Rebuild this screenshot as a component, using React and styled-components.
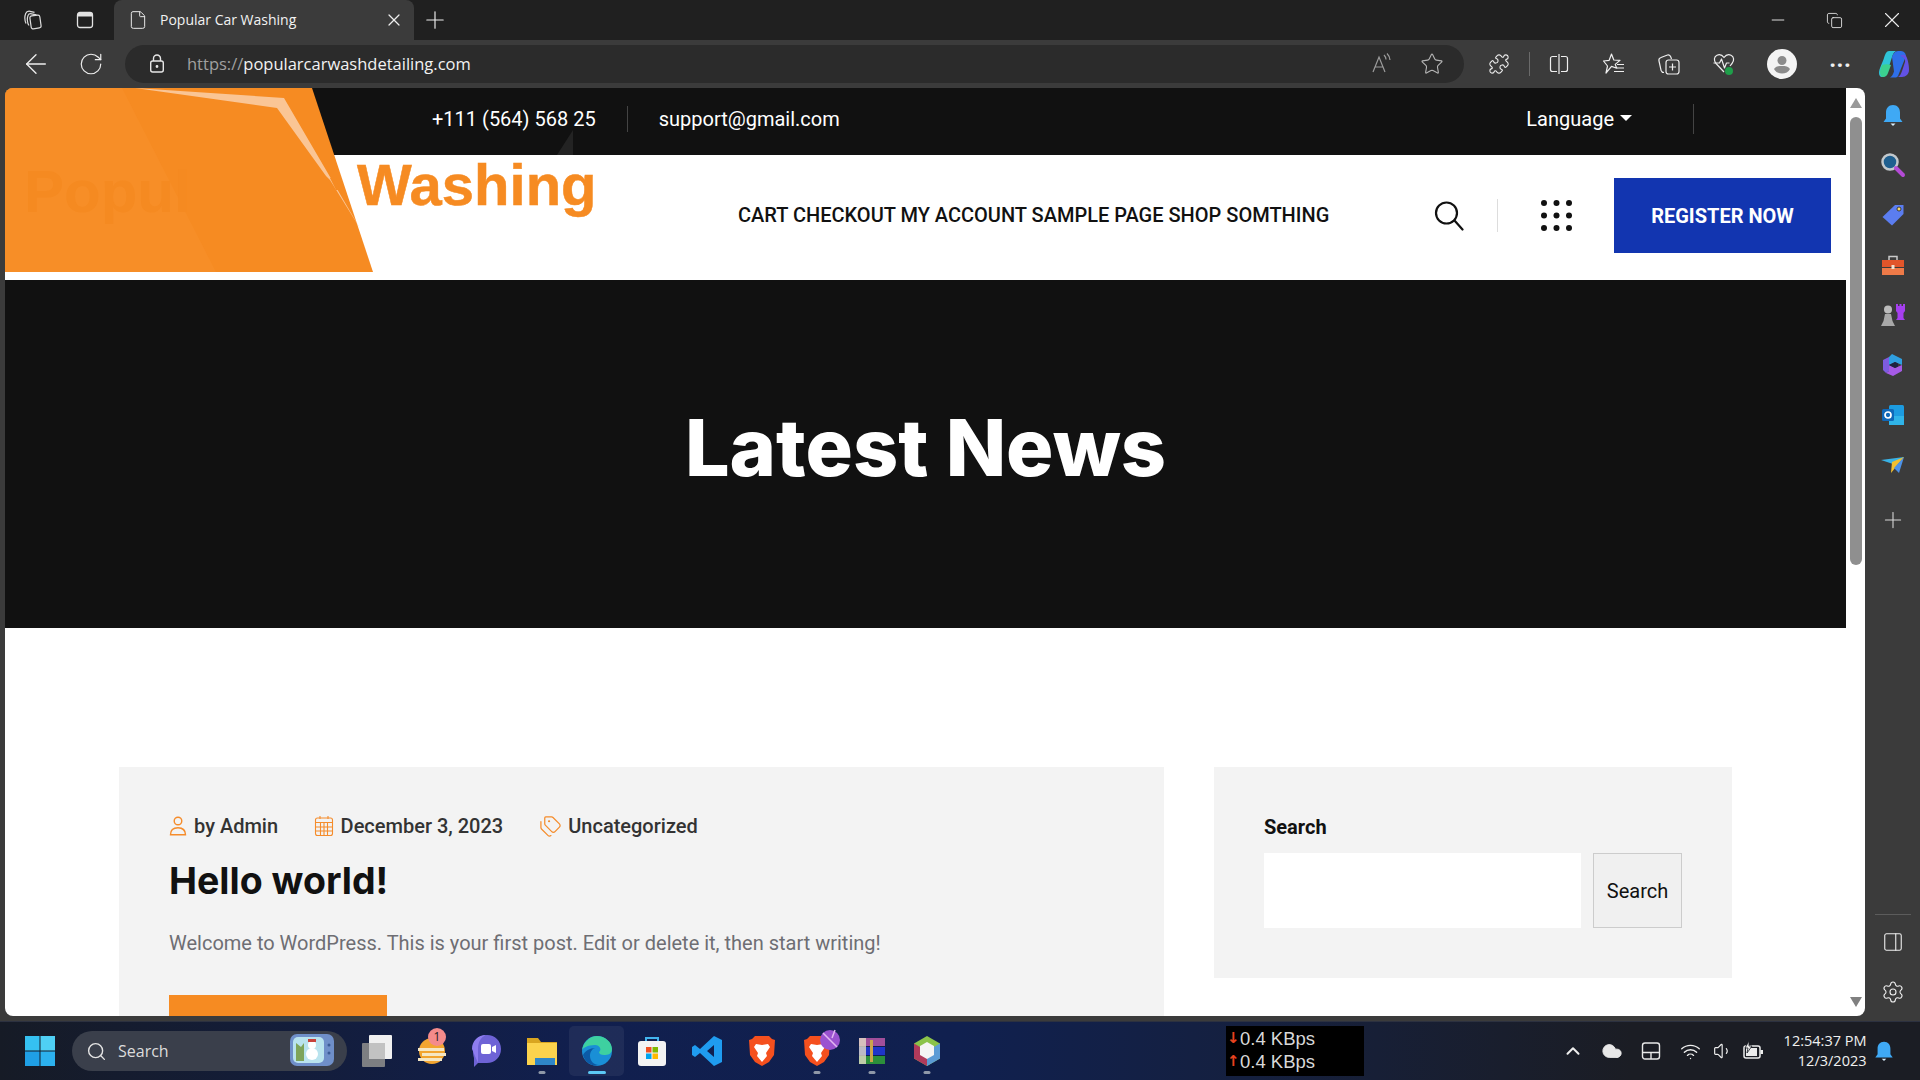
import styled, { createGlobalStyle } from 'styled-components';
import {
  ArrowLeft, RotateCw, Star, Puzzle, Plus, X, Minus, Search as SearchIcon, File, Copy, Settings,
  PanelRight, ChevronUp, Cloud, Wifi, Volume1, Tags,
} from 'lucide-react';

const GlobalStyle = createGlobalStyle`
  html, body {
    margin: 0;
    padding: 0;
    background: #3b3b3b;
    overflow: hidden;
  }
  * { box-sizing: border-box; }
`;

const ui = '"Open Sans", "Noto Sans", sans-serif';
const site = 'Roboto, "Liberation Sans", sans-serif';

const SIDE_ICONS = [Bell, Magnifier, PriceTag, Toolbox, Chess, M365, Outlook, Plane];
const TASK_ICONS = [
  { key: 'view', Icon: TaskView },
  { key: 'burger', Icon: Burger },
  { key: 'meet', Icon: Meet },
  { key: 'files', Icon: Folder, open: true },
  { key: 'edge', Icon: Edge, active: true },
  { key: 'store', Icon: Store },
  { key: 'code', Icon: Code },
  { key: 'brave', Icon: Brave },
  { key: 'brave2', Icon: BravePurple, open: true },
  { key: 'rar', Icon: Rar, open: true },
  { key: 'box', Icon: Cube, open: true },
];

function Bell({ size = 24 }) {
  return (
    <svg width={size} height={size} viewBox="0 0 24 24">
      <path d="M12 2c-4.500 0-7 3.400-7 7.500v6L2.500 19h19L19 15.500v-6C19 5.400 16.500 2 12 2z" fill="#3fa9f5" />
      <path d="M9.500 20.500h5L12 23z" fill="#d8eefc" />
    </svg>
  );
}

function Magnifier() {
  return (
    <svg width="26" height="26" viewBox="0 0 26 26">
      <circle cx="10" cy="10" r="7.500" fill="#1f5f8f" stroke="#c2c8cc" strokeWidth="2.500" />
      <path d="M16 16l7 7" stroke="#b44bd6" strokeWidth="4" strokeLinecap="round" />
    </svg>
  );
}

function PriceTag() {
  return (
    <svg width="24" height="24" viewBox="0 0 24 24">
      <path d="M14 2h8.500v9L11 22.500 1.500 14z" fill="#5b7df0" />
      <circle cx="18" cy="6" r="2" fill="#f5d76e" stroke="#222" strokeWidth="0.800" />
    </svg>
  );
}

function Toolbox() {
  return (
    <svg width="24" height="22" viewBox="0 0 24 22">
      <path d="M8 6V2.500h8V6" fill="none" stroke="#c9c9c9" strokeWidth="1.500" />
      <rect x="1" y="6" width="22" height="7" fill="#e2552a" />
      <rect x="1" y="14" width="22" height="7" fill="#ee7a48" />
      <rect x="10.500" y="11" width="3" height="4" fill="#f3e3d0" />
    </svg>
  );
}

function Chess() {
  return (
    <svg width="26" height="24" viewBox="0 0 26 24">
      <path d="M16 1h2v2h1.500V1h2v2H23V1h2v7l-1.500 2v5l1.500 2h-9l1.500-2v-5L16 8z" fill="#a63ff0" />
      <circle cx="8" cy="6.500" r="4" fill="#bcbcbc" />
      <path d="M5 11h6l1.500 7 2.500 5H1l2.500-5z" fill="#a8a8a8" />
    </svg>
  );
}

function M365() {
  return (
    <svg width="22" height="24" viewBox="0 0 22 24">
      <path d="M10 1l10 5v6l-7-3-6 3V4z" fill="#2f9fe0" />
      <path d="M1 7l6-3v14l-3 2-3-3z" fill="#7d5ce0" />
      <path d="M7 12l6 3 7-3v6l-9 5-7-3 3-2z" fill="#a55ae6" />
      <path d="M13 9l3 1.500v3L13 15l-6-3z" fill="#1d2340" />
    </svg>
  );
}

function Outlook() {
  return (
    <svg width="22" height="22" viewBox="0 0 22 22">
      <rect x="7" y="1" width="15" height="20" rx="1.500" fill="#1c9be0" />
      <path d="M7 12h15v9H7z" fill="#30b4e8" />
      <rect x="0" y="5" width="12" height="12" rx="1.500" fill="#0f68b8" />
      <circle cx="6" cy="11" r="3" fill="none" stroke="#fff" strokeWidth="1.700" />
    </svg>
  );
}

function Plane() {
  return (
    <svg width="24" height="18" viewBox="0 0 24 18">
      <path d="M0 4l23-3-8 8z" fill="#39b2e6" />
      <path d="M23 1L11 6l-1 11z" fill="#f3c02f" />
      <path d="M23 1l-5 16-5-5z" fill="#4d92e8" />
    </svg>
  );
}

function Workspaces() {
  return (
    <svg width="22" height="22" viewBox="0 0 22 22" fill="none" stroke="#dcdcdc" strokeWidth="1.200">
      <rect x="8.500" y="6.500" width="10" height="13" rx="2" transform="rotate(-8 13 13)" />
      <path d="M7 16.500C5 14 5 9 6 6.500c.6-1.500 2-2 3.500-1.700l5 1" />
      <path d="M4 14.500C2.500 11 2.700 7 3.700 4.500 4.500 2.500 6 2 8 2.300l4.500 1" />
    </svg>
  );
}

function TabActions() {
  return (
    <svg width="20" height="20" viewBox="0 0 20 20" fill="none">
      <rect x="2.500" y="2.500" width="15" height="15" rx="2.500" stroke="#e2e2e2" strokeWidth="1.300" />
      <path d="M2.500 5a2.500 2.500 0 0 1 2.500-2.500h10A2.500 2.500 0 0 1 17.500 5v1.500h-15z" fill="#e2e2e2" />
    </svg>
  );
}

function LockDot() {
  return (
    <svg width="18" height="22" viewBox="0 0 18 22" fill="none" stroke="#e6e6e6" strokeWidth="1.400">
      <rect x="2.700" y="8" width="12.600" height="11" rx="2" />
      <path d="M5.500 8V5.500a3.500 3.500 0 0 1 7 0V8" />
      <circle cx="9" cy="13.500" r="0.700" fill="#e6e6e6" />
    </svg>
  );
}

function ReadAloud() {
  return (
    <svg width="22" height="22" viewBox="0 0 22 22" fill="none" stroke="#9c9c9c" strokeWidth="1.200">
      <path d="M2 20l6-15 6 15M4 15h8" />
      <path d="M13 3c1.500 1.500 2 3 2 4.500M16 1.500c2 2 3 4 3 6.500" />
    </svg>
  );
}

function SplitScreen() {
  return (
    <svg width="22" height="22" viewBox="0 0 22 22" fill="none" stroke="#eee" strokeWidth="1.200">
      <path d="M9 3.500H4.500a2 2 0 0 0-2 2v11a2 2 0 0 0 2 2H9M13 3.500h4.500a2 2 0 0 1 2 2v11a2 2 0 0 1-2 2H13M11 1v20" />
    </svg>
  );
}

function FavoriteList() {
  return (
    <svg width="24" height="24" viewBox="0 0 24 24" fill="none" stroke="#eee" strokeWidth="1.200" strokeLinejoin="round">
      <path d="M9.500 2l2.300 6 6.200.4-4.800 4 1.500 3.800-5.200-1.800L4 21l1.500-7L1.500 9l5.700-.7z" />
      <path d="M15 12.500h7M15 16h7M12 19.500h10" />
    </svg>
  );
}

function Collections() {
  return (
    <svg width="24" height="24" viewBox="0 0 24 24" fill="none" stroke="#eee" strokeWidth="1.200">
      <path d="M7 20.500c-1.500 0-2.500-.8-3-2.300L2 9c-.4-1.700.5-3 2-3.500L10.500 3c1.500-.4 2.800.5 3.300 2l.7 2" />
      <rect x="9" y="8" width="13" height="14" rx="2.500" />
      <path d="M15.500 11.500v7M12 15h7" />
    </svg>
  );
}

function HeartStatus() {
  return (
    <svg width="24" height="24" viewBox="0 0 24 24" fill="none" stroke="#eee" strokeWidth="1.200" strokeLinejoin="round">
      <path d="M12 20l-8-8.500C1.500 8.500 2 4.500 5 3.200c2.500-1 5.200-.2 7 2.300 1.800-2.500 4.500-3.300 7-2.300 3 1.300 3.500 5.300 1 8.300L18 14" />
      <path d="M1.500 11h6l2-4 3 9 2-5h3" />
      <circle cx="17" cy="19" r="4" fill="#1f9e4a" stroke="none" />
    </svg>
  );
}

function Profile() {
  return (
    <svg width="30" height="30" viewBox="0 0 30 30">
      <circle cx="15" cy="15" r="15" fill="#f4f4f4" />
      <circle cx="15" cy="11.500" r="4.500" fill="#8b8b8b" />
      <path d="M7 20c1.500-2.500 4.500-3 8-3s6.500.5 8 3c-1.500 3-4.500 4.500-8 4.500S8.500 23 7 20z" fill="#8b8b8b" />
    </svg>
  );
}

function Copilot() {
  return (
    <svg width="32" height="32" viewBox="0 0 32 32">
      <path d="M11 3h7c-2 1-3 3-4 6L9 25c-.8 2.500-2.500 4-5 4-2 0-3-2-3-4 0-4 3-9 5-15 1.200-4 2.500-7 5-7z" fill="#2fc4d8" />
      <path d="M2 24c0-2 1-4 2-7 3-1 6-1 9 0l-3 8c-.8 2.500-2.500 4-5 4-2 0-3-2-3-5z" fill="#3bd08f" />
      <path d="M14 9c1-3 3-6 6-6h3c3 0 5 3 5 5l-8 20c-.7 1-2 1.500-3 1.500h-5c2-1 3-3 4-6z" fill="#2f6fe8" />
      <path d="M22 8c2-1 4-2 6 0 2 3 3 10 3 14 0 4-3 7-7 7h-4c2-1 3-3 4-6l3-9c.7-2.500-1-5-5-6z" fill="#6252e4" />
    </svg>
  );
}

function Dots() {
  const cells = [0, 1, 2].flatMap((y) => [0, 1, 2].map((x) => [x, y]));
  return (
    <svg width="32" height="32" viewBox="0 0 32 32" fill="#111">
      {cells.map(([x, y]) => (
        <circle key={`${x}-${y}`} cx={3 + x * 12.500} cy={3 + y * 12.500} r="3" />
      ))}
    </svg>
  );
}

function HeaderSearch() {
  return (
    <svg width="30" height="30" viewBox="0 0 30 30" fill="none" stroke="#111" strokeWidth="2.200" strokeLinecap="round">
      <circle cx="12.500" cy="12" r="10.500" />
      <path d="M20.500 19.500L28.500 28.500" />
    </svg>
  );
}

function LogoShape() {
  return (
    <LogoSvg viewBox="0 0 370 184">
      <path d="M0 0H308L369 184H0z" fill="#f68b22" />
      <path d="M0 0H118L212 184H0z" fill="#f78e27" />
      <path d="M131 0L280 10 357 142 326 92 322 88 273 20z" fill="#fac595" />
      <path d="M326 90l6 0 4 12-4 0z" fill="#f68b22" />
    </LogoSvg>
  );
}

function Person() {
  return (
    <svg width="18" height="20" viewBox="0 0 18 20" fill="none" stroke="#f58c2b" strokeWidth="1.400">
      <circle cx="9" cy="5" r="3.800" />
      <path d="M1.500 18.800c0-4.500 3-7 7.500-7s7.500 2.500 7.500 7z" />
    </svg>
  );
}

function CalendarGrid() {
  return (
    <svg width="20" height="22" viewBox="0 0 20 22" fill="none" stroke="#f58c2b" strokeWidth="1.100">
      <rect x="1.500" y="3" width="17" height="17.500" rx="2" />
      <path d="M1.500 7.500h17M1.500 12h17M1.500 16h17M6.500 7.500v13M10 7.500v13M13.500 7.500v13M6 1v3M14 1v3" />
    </svg>
  );
}

function Start() {
  return (
    <svg width="30" height="30" viewBox="0 0 30 30">
      <rect x="0" y="0" width="14.500" height="14.500" fill="#35c1f1" />
      <rect x="15.500" y="0" width="14.500" height="14.500" fill="#4fd0f5" />
      <rect x="0" y="15.500" width="14.500" height="14.500" fill="#1f9fe5" />
      <rect x="15.500" y="15.500" width="14.500" height="14.500" fill="#2cb1ee" />
    </svg>
  );
}

function SnowTv() {
  return (
    <svg width="44" height="36" viewBox="0 0 44 36">
      <rect x="0" y="1" width="44" height="32" rx="7" fill="#6f8fc9" />
      <rect x="3" y="4" width="31" height="26" rx="5" fill="#b9e3ee" />
      <circle cx="22" cy="21" r="6" fill="#fff" />
      <circle cx="22" cy="12" r="4" fill="#fff" />
      <rect x="18" y="6" width="8" height="3" fill="#c7423b" />
      <path d="M6 28V10l5 4 3-4v18z" fill="#7ea45a" />
      <circle cx="39" cy="12" r="1.500" fill="#3b5b96" />
      <circle cx="39" cy="20" r="1.500" fill="#3b5b96" />
    </svg>
  );
}

function TaskView() {
  return (
    <svg width="30" height="34" viewBox="0 0 30 34">
      <rect x="7" y="1" width="23" height="24" rx="1" fill="#f0f0f0" />
      <rect x="0" y="9" width="23" height="24" rx="1" fill="#8a8a8a" fillOpacity="0.900" />
      <rect x="7" y="9" width="16" height="16" fill="#c2c2c2" />
    </svg>
  );
}

function Burger() {
  return (
    <svg width="30" height="32" viewBox="0 0 30 32">
      <circle cx="15" cy="16" r="13" fill="#f2a530" />
      <path d="M1 13h26v3H1zM5 18h24v3H5zM1 23h24v3H1z" fill="#f5e7c4" />
    </svg>
  );
}

function Meet() {
  return (
    <svg width="30" height="34" viewBox="0 0 30 34">
      <path d="M15 1c8 0 14 6 14 14s-6 14-14 14H6l-4 4v-9C1 21 1 18 1 15 1 7 7 1 15 1z" fill="#6e63d6" />
      <path d="M0 15C0 7 6 1 14 1c-5 2-8 7-8 14v14z" fill="#8e7df0" />
      <rect x="9" y="10" width="10" height="10" rx="2" fill="#fff" />
      <path d="M20 13l4-2v8l-4-2z" fill="#fff" />
    </svg>
  );
}

function Folder() {
  return (
    <svg width="32" height="30" viewBox="0 0 32 30">
      <path d="M1 2h11l3 4h16v6H1z" fill="#d9a520" />
      <rect x="1" y="7" width="30" height="22" fill="#fcd34d" />
      <rect x="9" y="22" width="20" height="7" fill="#2f87c9" />
    </svg>
  );
}

function Edge() {
  return (
    <svg width="32" height="32" viewBox="0 0 32 32">
      <circle cx="16" cy="16" r="15" fill="#1a8fd6" />
      <path d="M1 16C2 7 9 1 16 1c8 0 15 6 15 13 0 5-4 6-8 6-3 0-5-1-5-3 3-2 1-7-4-7-7 0-13 3-13 6z" fill="#3ed0a0" />
      <path d="M14 13c-3 1-5 4-5 8 0 5 4 9 9 9-7 2-14-3-16-10 2-4 7-7 12-7z" fill="#0c5aa6" />
    </svg>
  );
}

function Store() {
  return (
    <svg width="30" height="32" viewBox="0 0 30 32">
      <path d="M9 6V3h12v3" fill="none" stroke="#42b4ee" strokeWidth="2" />
      <rect x="1" y="6" width="28" height="25" rx="3" fill="#f3f3f3" />
      <rect x="9" y="12" width="5.500" height="5.500" fill="#f05022" />
      <rect x="15.500" y="12" width="5.500" height="5.500" fill="#7fba00" />
      <rect x="9" y="18.500" width="5.500" height="5.500" fill="#00a4ef" />
      <rect x="15.500" y="18.500" width="5.500" height="5.500" fill="#ffb900" />
    </svg>
  );
}

function Code() {
  return (
    <svg width="32" height="32" viewBox="0 0 32 32">
      <path d="M23 1l8 4v22l-8 4L9 18l-5 4-3-2v-8l3-2 5 4zm0 9l-7 6 7 6z" fill="#1f9cf0" fillRule="evenodd" />
    </svg>
  );
}

function Brave() {
  return (
    <svg width="28" height="32" viewBox="0 0 28 32">
      <path d="M7 1h14l3 3 3 1-1 15-5 7-7 4-7-4-5-7L1 5l3-1z" fill="#f5501e" />
      <path d="M8 9l6 1 6-1 2 3-4 6 1 3-5 6-5-6 1-3-4-6z" fill="#fff" />
    </svg>
  );
}

function BravePurple() {
  return (
    <OverlapIcon>
      <Brave />
      <svg width="22" height="26" viewBox="0 0 22 26">
        <circle cx="11" cy="13" r="10" fill="#9a52d0" />
        <path d="M4 6l14 14M16 3l-3 8" stroke="#e2b7f2" strokeWidth="1.500" />
      </svg>
    </OverlapIcon>
  );
}

function Rar() {
  return (
    <svg width="28" height="28" viewBox="0 0 28 28">
      <rect x="1" y="1" width="26" height="8" fill="#a14f9a" />
      <rect x="1" y="10" width="26" height="8" fill="#1f35c8" />
      <rect x="1" y="19" width="26" height="8" fill="#2c8f3a" />
      <rect x="1" y="1" width="7" height="26" fill="#e4dcc6" fillOpacity="0.800" />
      <rect x="12" y="3" width="3" height="22" fill="#caa44a" />
    </svg>
  );
}

function Cube() {
  return (
    <svg width="28" height="32" viewBox="0 0 28 32">
      <path d="M14 1l13 7.500v15L14 31 1 23.500v-15z" fill="#8bc34a" />
      <path d="M1 8.500L14 16v15L1 23.500z" fill="#b03a5b" />
      <path d="M27 8.500L14 16v15l13-7.500z" fill="#5b9bd5" />
      <path d="M14 7l7 4v9l-7 4-7-4v-9z" fill="#f4f4f4" />
    </svg>
  );
}

function Touchpad() {
  return (
    <svg width="20" height="20" viewBox="0 0 20 20" fill="none" stroke="#e8e8e8" strokeWidth="1.400">
      <rect x="1.500" y="2" width="17" height="16" rx="2.500" />
      <path d="M1.500 11.500h17M10 11.500V18" />
    </svg>
  );
}

function Battery() {
  return (
    <svg width="22" height="20" viewBox="0 0 22 20">
      <rect x="2" y="5" width="16" height="12" rx="2" fill="none" stroke="#ececec" strokeWidth="1.500" />
      <rect x="4" y="7" width="11" height="8" fill="#ececec" />
      <rect x="18.500" y="9" width="2.500" height="4" fill="#ececec" />
      <path d="M7 0L3 7h3l-1 5 5-7H7z" fill="#ececec" stroke="#161a22" strokeWidth="0.800" />
    </svg>
  );
}

export default function App() {
  return (
    <Screen>
      <GlobalStyle />
      <TabStrip>
        <StripButton><Workspaces /></StripButton>
        <StripButton><TabActions /></StripButton>
        <Tab>
          <File size={20} strokeWidth={1.2} color="#e8e8e8" />
          <TabTitle>Popular Car Washing</TabTitle>
          <TabClose><X size={20} strokeWidth={1.5} color="#eee" /></TabClose>
        </Tab>
        <NewTab><Plus size={28} strokeWidth={1} color="#eee" /></NewTab>
        <WindowControls>
          <WindowButton><Minus size={20} strokeWidth={1.1} color="#eee" /></WindowButton>
          <WindowButton><Copy size={17} strokeWidth={1.2} color="#eee" /></WindowButton>
          <WindowButton><X size={26} strokeWidth={1} color="#eee" /></WindowButton>
        </WindowControls>
      </TabStrip>

      <Toolbar>
        <ToolSlot><ArrowLeft size={32} strokeWidth={1} color="#eee" /></ToolSlot>
        <ToolSlot><RotateCw size={26} strokeWidth={1.1} color="#eee" /></ToolSlot>
        <AddressBar>
          <LockDot />
          <Url>
            <UrlScheme>https://</UrlScheme>popularcarwashdetailing.com
          </Url>
          <AddressTools>
            <AddressSlot><ReadAloud /></AddressSlot>
            <AddressSlot><Star size={24} strokeWidth={1.1} color="#b5b5b5" /></AddressSlot>
          </AddressTools>
        </AddressBar>
        <ToolSlot><Puzzle size={22} strokeWidth={1.2} color="#eee" /></ToolSlot>
        <ToolDivider />
        <ToolSlot><SplitScreen /></ToolSlot>
        <ToolSlot><FavoriteList /></ToolSlot>
        <ToolSlot><Collections /></ToolSlot>
        <ToolSlot><HeartStatus /></ToolSlot>
        <ToolSlot $width={62}><Profile /></ToolSlot>
        <ToolSlot><MoreDots>···</MoreDots></ToolSlot>
        <ToolSlot $width={52}><Copilot /></ToolSlot>
      </Toolbar>

      <Body>
        <Page>
          <Content>
            <LogoBox>
              <LogoShape />
              <LogoGhost>Popul</LogoGhost>
              <LogoWord>Washing</LogoWord>
              <LogoShadow />
            </LogoBox>

            <TopBar>
              <TopText>+111 (564) 568 25</TopText>
              <TopDivider />
              <TopText>support@gmail.com</TopText>
              <LanguageGroup>
                <TopText>Language</TopText>
                <Caret />
                <LanguageDivider />
              </LanguageGroup>
            </TopBar>

            <Header>
              <Nav>CART CHECKOUT MY ACCOUNT SAMPLE PAGE SHOP SOMTHING</Nav>
              <HeaderTools>
                <HeaderSearch />
                <HeaderDivider />
                <Dots />
              </HeaderTools>
              <RegisterButton>REGISTER NOW</RegisterButton>
            </Header>

            <Hero>
              <HeroTitle>Latest News</HeroTitle>
            </Hero>

            <Main>
              <PostCard>
                <Meta>
                  <MetaItem $gap={7}><Person />by Admin</MetaItem>
                  <MetaItem $gap={6.5}><CalendarGrid />December 3, 2023</MetaItem>
                  <MetaItem $gap={6}><Tags size={23} strokeWidth={1.3} color="#f58c2b" />Uncategorized</MetaItem>
                </Meta>
                <PostTitle>Hello world!</PostTitle>
                <Excerpt>Welcome to WordPress. This is your first post. Edit or delete it, then start writing!</Excerpt>
                <ReadMore />
              </PostCard>
              <Widget>
                <WidgetLabel>Search</WidgetLabel>
                <SearchRow>
                  <SearchInput />
                  <SearchButton>Search</SearchButton>
                </SearchRow>
              </Widget>
            </Main>
          </Content>
          <ScrollRail>
            <ScrollArrow />
            <ScrollThumb />
            <ScrollArrow $down />
          </ScrollRail>
        </Page>

        <SideBar>
          {SIDE_ICONS.map((Icon, i) => (
            <SideSlot key={i}><Icon /></SideSlot>
          ))}
          <SidePlus><Plus size={26} strokeWidth={1} color="#d8d8d8" /></SidePlus>
          <SideBottom>
            <SideRule />
            <SideSlot><PanelRight size={22} strokeWidth={1.2} color="#eee" /></SideSlot>
            <SideSlot><Settings size={24} strokeWidth={1.1} color="#eee" /></SideSlot>
          </SideBottom>
        </SideBar>
      </Body>

      <Taskbar>
        <StartSlot><Start /></StartSlot>
        <SearchPill>
          <SearchIcon size={21} strokeWidth={1.6} color="#e4e4e4" />
          <PillText>Search</PillText>
          <SnowTv />
        </SearchPill>
        <TaskIcons>
          {TASK_ICONS.map(({ key, Icon, open, active }) => (
            <TaskSlot key={key} $active={active}>
              <Icon />
              {key === 'burger' && <Badge>1</Badge>}
              {(open || active) && <Indicator $active={active} />}
            </TaskSlot>
          ))}
        </TaskIcons>
        <NetMeter>
          <NetLine><NetArrow>↓</NetArrow>0.4 KBps</NetLine>
          <NetLine><NetArrow>↑</NetArrow>0.4 KBps</NetLine>
        </NetMeter>
        <Tray>
          <TraySlot $width={38}><ChevronUp size={22} strokeWidth={2.2} color="#eee" /></TraySlot>
          <TraySlot $width={40}><Cloud size={22} fill="#e8e8e8" strokeWidth={1} color="#e8e8e8" /></TraySlot>
          <TraySlot $width={39}><Touchpad /></TraySlot>
          <TraySlot $width={39}><Wifi size={21} strokeWidth={1.6} color="#eee" /></TraySlot>
          <TraySlot $width={26}><Volume1 size={20} strokeWidth={1.4} color="#eee" /></TraySlot>
          <TraySlot $width={34}><Battery /></TraySlot>
          <Clock>
            <div>12:54:37 PM</div>
            <div>12/3/2023</div>
          </Clock>
          <TraySlot $width={35.5}><Bell size={22} /></TraySlot>
        </Tray>
      </Taskbar>
    </Screen>
  );
}

const Screen = styled.div`
  width: 1920px;
  height: 1080px;
  display: flex;
  flex-direction: column;
  background: #3b3b3b;
  font-family: ${ui};
  overflow: hidden;
`;

const TabStrip = styled.div`
  height: 40px;
  flex: none;
  display: flex;
  align-items: center;
  padding-left: 7px;
  background: #202020;
`;

const StripButton = styled.div`
  width: 52px;
  height: 40px;
  display: flex;
  align-items: center;
  justify-content: center;
`;

const Tab = styled.div`
  width: 300px;
  height: 40px;
  margin-left: 3px;
  display: flex;
  align-items: center;
  gap: 12px;
  padding: 0 10px 0 14px;
  background: #3b3b3b;
  border-radius: 8px 8px 0 0;
`;

const TabTitle = styled.span`
  margin-bottom: 2px;
  font-size: 14px;
  color: #f2f2f2;
  white-space: nowrap;
`;

const TabClose = styled.span`
  margin-left: auto;
  display: flex;
`;

const NewTab = styled.div`
  width: 42px;
  display: flex;
  justify-content: center;
`;

const WindowControls = styled.div`
  margin-left: auto;
  display: flex;
`;

const WindowButton = styled.div`
  width: 57px;
  height: 40px;
  display: flex;
  align-items: center;
  justify-content: center;
`;

const Toolbar = styled.div`
  height: 48px;
  flex: none;
  display: flex;
  align-items: center;
  padding-left: 8px;
  background: #3b3b3b;
`;

const ToolSlot = styled.div`
  width: ${(p) => p.$width || 55}px;
  height: 38px;
  flex: none;
  display: flex;
  align-items: center;
  justify-content: center;
`;

const ToolDivider = styled.div`
  width: 1px;
  height: 24px;
  margin: 0 1px 0 3px;
  background: #6a6a6a;
`;

const MoreDots = styled.span`
  font-size: 22px;
  font-weight: 700;
  letter-spacing: 1px;
  color: #eee;
`;

const AddressBar = styled.div`
  width: 1339px;
  height: 38px;
  flex: none;
  margin: 0 7px;
  display: flex;
  align-items: center;
  padding: 0 7px 0 23px;
  background: #2b2b2b;
  border-radius: 19px;
`;

const Url = styled.span`
  margin: 0 0 2px 21px;
  font-size: 16.500px;
  color: #f2f2f2;
  white-space: nowrap;
`;

const UrlScheme = styled.span`
  color: #a0a0a0;
`;

const AddressTools = styled.div`
  margin-left: auto;
  display: flex;
`;

const AddressSlot = styled.div`
  width: 50px;
  display: flex;
  justify-content: center;
`;

const Body = styled.div`
  flex: none;
  height: 928px;
  display: flex;
  padding-left: 5px;
`;

const Page = styled.div`
  width: 1860px;
  height: 928px;
  flex: none;
  display: flex;
  background: #fff;
  border-radius: 8px;
  overflow: hidden;
`;

const Content = styled.div`
  position: relative;
  width: 1841px;
  flex: none;
  overflow: hidden;
`;

const LogoBox = styled.div`
  position: absolute;
  left: -1px;
  top: 0;
  width: 600px;
  height: 184px;
`;

const LogoSvg = styled.svg`
  display: block;
  width: 370px;
  height: 184px;
`;

const LogoGhost = styled.span`
  position: absolute;
  left: 20px;
  top: 74px;
  font: 700 60px/1 "Liberation Sans", sans-serif;
  color: #f58a21;
`;

const LogoWord = styled.span`
  position: absolute;
  left: 353px;
  top: 68px;
  font: 700 58px/1 "Liberation Sans", sans-serif;
  color: #f68b22;
  -webkit-text-stroke: 0.5px #f68b22;
`;

const LogoShadow = styled.div`
  position: absolute;
  left: 553px;
  top: 42px;
  width: 16px;
  height: 25px;
  background: #232323;
  clip-path: polygon(100% 0, 0 100%, 100% 100%);
`;

const TopBar = styled.div`
  height: 67px;
  display: flex;
  align-items: center;
  padding: 0 152px 5px 427px;
  background: #111;
`;

const TopText = styled.span`
  font: 400 20px ${site};
  color: #fff;
  white-space: nowrap;
`;

const TopDivider = styled.div`
  width: 1px;
  height: 26px;
  margin: 0 31px;
  background: #444;
`;

const LanguageGroup = styled.div`
  margin-left: auto;
  display: flex;
  align-items: center;
`;

const Caret = styled.span`
  margin: 0 0 3px 6px;
  border-left: 6px solid transparent;
  border-right: 6px solid transparent;
  border-top: 6px solid #fff;
`;

const LanguageDivider = styled.div`
  width: 1px;
  height: 30px;
  margin-left: 61px;
  background: #444;
`;

const Header = styled.div`
  height: 125px;
  display: flex;
  align-items: center;
  padding: 23px 15px 27px 733px;
  background: #fff;
`;

const Nav = styled.nav`
  position: relative;
  top: -1px;
  font: 500 20px ${site};
  color: #111;
  white-space: nowrap;
`;

const HeaderTools = styled.div`
  margin-left: auto;
  display: flex;
  align-items: center;
`;

const HeaderDivider = styled.div`
  width: 1px;
  height: 33px;
  margin: 0 43px 0 33px;
  background: #ddd;
`;

const RegisterButton = styled.button`
  width: 217px;
  height: 75px;
  margin-left: 41px;
  border: none;
  background: #1235b0;
  color: #fff;
  font: 700 20px ${site};
`;

const Hero = styled.section`
  height: 348px;
  display: flex;
  align-items: center;
  justify-content: center;
  padding-bottom: 14px;
  background: #111;
`;

const HeroTitle = styled.h1`
  margin: 0;
  font: 800 79px/1 Inter, sans-serif;
  color: #fff;
`;

const Main = styled.main`
  display: flex;
  align-items: flex-start;
  gap: 50px;
  padding: 139px 0 0 114px;
`;

const PostCard = styled.article`
  width: 1045px;
  flex: none;
  padding: 44px 50px 0;
  background: #f3f3f3;
`;

const Meta = styled.div`
  display: flex;
  gap: 36px;
  height: 30px;
  align-items: center;
`;

const MetaItem = styled.span`
  display: flex;
  align-items: center;
  gap: ${(p) => p.$gap}px;
  font: 500 20px ${site};
  color: #333;
`;

const PostTitle = styled.h2`
  margin: 16px 0 0;
  font: 700 37.500px/48px Inter, sans-serif;
  color: #111;
`;

const Excerpt = styled.p`
  margin: 23px 0 0;
  font: 400 20px/30px ${site};
  color: #6e6e73;
`;

const ReadMore = styled.div`
  width: 218px;
  height: 60px;
  margin-top: 37px;
  background: #f68b22;
`;

const Widget = styled.aside`
  width: 518px;
  height: 211px;
  flex: none;
  padding: 46px 50px;
  background: #f3f3f3;
`;

const WidgetLabel = styled.div`
  font: 700 20px/28px ${site};
  color: #111;
`;

const SearchRow = styled.div`
  display: flex;
  gap: 12px;
  margin-top: 12px;
`;

const SearchInput = styled.div`
  width: 317px;
  height: 75px;
  background: #fff;
`;

const SearchButton = styled.button`
  width: 89px;
  height: 75px;
  padding: 0;
  border: 1px solid #ccc;
  background: #f0f0f0;
  color: #111;
  font: 400 20px ${site};
`;

const ScrollRail = styled.div`
  flex: 1;
  display: flex;
  flex-direction: column;
  align-items: center;
  padding: 10px 0 9px;
`;

const ScrollArrow = styled.div`
  width: 0;
  height: 0;
  flex: none;
  border-left: 6px solid transparent;
  border-right: 6px solid transparent;
  ${(p) => (p.$down ? 'border-top: 10px solid #808080; margin-top: auto;' : 'border-bottom: 10px solid #999;')}
`;

const ScrollThumb = styled.div`
  width: 12px;
  height: 448px;
  margin-top: 9px;
  background: #8f8f8f;
  border-radius: 6px;
`;

const SideBar = styled.aside`
  flex: 1;
  display: flex;
  flex-direction: column;
  align-items: center;
  padding-top: 2px;
`;

const SideSlot = styled.div`
  width: 100%;
  height: 50px;
  flex: none;
  display: flex;
  align-items: center;
  justify-content: center;
`;

const SidePlus = styled(SideSlot)`
  margin-top: 5px;
`;

const SideBottom = styled.div`
  width: 100%;
  margin-top: auto;
  margin-bottom: -1px;
  display: flex;
  flex-direction: column;
  align-items: center;
`;

const SideRule = styled.div`
  width: 36px;
  height: 1px;
  margin-bottom: 2px;
  background: #5c5c5c;
`;

const Taskbar = styled.footer`
  height: 59px;
  margin-top: 5px;
  flex: none;
  display: flex;
  align-items: center;
  padding-left: 25px;
  border-top: 1px solid #2c3140;
  background: linear-gradient(90deg, #161b26 0%, #111f4e 30%, #10204f 50%, #15203f 65%, #1b1d24 85%);
`;

const StartSlot = styled.div`
  width: 47px;
  flex: none;
  display: flex;
`;

const SearchPill = styled.div`
  width: 275px;
  height: 40px;
  flex: none;
  display: flex;
  align-items: center;
  padding: 0 13px 0 14px;
  background: #3a3f4b;
  border-radius: 20px;
`;

const PillText = styled.span`
  margin-left: 11px;
  margin-right: auto;
  font-size: 16px;
  color: #dcdcdc;
`;

const TaskIcons = styled.div`
  display: flex;
  margin-left: 2px;
`;

const TaskSlot = styled.div`
  position: relative;
  width: 55px;
  height: 50px;
  flex: none;
  display: flex;
  align-items: center;
  justify-content: center;
  border-radius: 5px;
  background: ${(p) => (p.$active ? 'rgba(255, 255, 255, 0.06)' : 'none')};
`;

const OverlapIcon = styled.div`
  position: relative;
  display: flex;
  svg:last-child {
    position: absolute;
    right: -10px;
    top: -8px;
  }
`;

const Badge = styled.span`
  position: absolute;
  left: 24px;
  top: 2px;
  width: 18px;
  height: 18px;
  border-radius: 50%;
  background: #f48b8b;
  color: #222;
  font-size: 12px;
  line-height: 18px;
  text-align: center;
`;

const Indicator = styled.span`
  position: absolute;
  bottom: 2px;
  left: 50%;
  transform: translateX(-50%);
  width: ${(p) => (p.$active ? 18 : 7)}px;
  height: 3px;
  border-radius: 2px;
  background: ${(p) => (p.$active ? '#5cc8f5' : '#8f98a8')};
`;

const NetMeter = styled.div`
  width: 138px;
  height: 50px;
  margin-left: 272px;
  flex: none;
  display: flex;
  flex-direction: column;
  justify-content: center;
  padding: 0 0 2px 1px;
  background: #000;
`;

const NetLine = styled.div`
  height: 23px;
  display: flex;
  align-items: center;
  font: 400 18.500px/23px "Liberation Sans", sans-serif;
  color: #d8d8d8;
`;

const NetArrow = styled.span`
  width: 13px;
  font: 700 15px/23px "DejaVu Sans", sans-serif;
  color: #e8431f;
`;

const Tray = styled.div`
  margin-left: auto;
  display: flex;
  align-items: center;
  padding-right: 18px;
`;

const TraySlot = styled.div`
  width: ${(p) => p.$width}px;
  flex: none;
  display: flex;
  justify-content: center;
`;

const Clock = styled.div`
  width: 97px;
  text-align: right;
  font-size: 14.500px;
  line-height: 20px;
  color: #f0f0f0;
`;
